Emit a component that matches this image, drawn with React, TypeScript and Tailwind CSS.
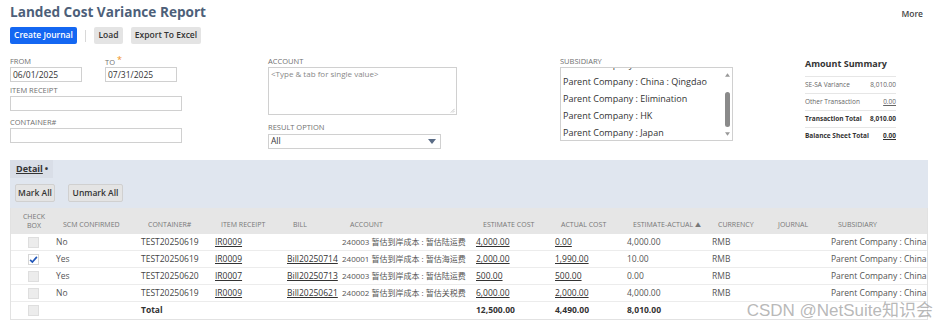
const cols = 'grid grid-cols-[40px_85px_74px_72px_55px_134px_79px_72px_85px_66px_53px_103px]';

type Row = {
  checked: boolean;
  scm: string;
  container: string;
  receipt: string;
  bill: string;
  account: string;
  estimate: string;
  actual: string;
  diff: string;
};

const rows: Row[] = [
  { checked: false, scm: 'No', container: 'TEST20250619', receipt: 'IR0009', bill: '', account: '240003 暂估到岸成本 : 暂估陆运费', estimate: '4,000.00', actual: '0.00', diff: '4,000.00' },
  { checked: true, scm: 'Yes', container: 'TEST20250619', receipt: 'IR0009', bill: 'Bill20250714', account: '240001 暂估到岸成本 : 暂估海运费', estimate: '2,000.00', actual: '1,990.00', diff: '10.00' },
  { checked: false, scm: 'Yes', container: 'TEST20250620', receipt: 'IR0007', bill: 'Bill20250713', account: '240003 暂估到岸成本 : 暂估陆运费', estimate: '500.00', actual: '500.00', diff: '0.00' },
  { checked: false, scm: 'No', container: 'TEST20250619', receipt: 'IR0009', bill: 'Bill20250621', account: '240002 暂估到岸成本 : 暂估关税费', estimate: '6,000.00', actual: '2,000.00', diff: '4,000.00' },
];

function Label({ children }: { children: React.ReactNode }) {
  return <div className="h-[9px] leading-[9px] text-[7.5px] uppercase text-[#707070]">{children}</div>;
}

function Box({ checked = false }: { checked?: boolean }) {
  return (
    <div className={`ml-[17px] w-[11px] h-[11px] border flex items-center justify-center ${checked ? 'bg-white border-[#d6d6d6]' : 'bg-[#ececec] border-[#dedede]'}`}>
      {checked && (
        <svg className="w-[9px] h-[9px]" viewBox="0 0 12 12">
          <path d="M1.5 6.5 L4.5 9.5 L10.5 2.5" fill="none" stroke="#2156b8" strokeWidth={2.2} />
        </svg>
      )}
    </div>
  );
}

export default function App() {
  return (
    <div className="relative w-[936px] h-[324px] overflow-hidden bg-white font-['Open_Sans','Noto_Sans_CJK_SC',sans-serif] text-[#333]">
      {/* Title */}
      <div className="flex items-start justify-between pl-[10px] pr-[13px] pt-[1px]">
        <h1 className="text-[13.6px] leading-[22px] font-bold text-[#4d5f79]">Landed Cost Variance Report</h1>
        <span className="mt-[7px] text-[8.5px] font-semibold text-[#444]">More</span>
      </div>

      {/* Buttons */}
      <div className="flex items-center pl-[10px] mt-[4px] h-[17px]">
        <button className="h-[17px] w-[67px] rounded-[2px] bg-[#1467f2] text-white text-[8.5px] font-semibold">Create Journal</button>
        <div className="mx-[8px] w-px h-[12px] bg-[#d8d8d8]" />
        <button className="h-[17px] w-[29px] rounded-[2px] bg-[#e4e4e4] text-[8.5px] font-semibold text-[#333]">Load</button>
        <button className="ml-[8px] h-[17px] w-[70px] rounded-[2px] bg-[#e4e4e4] text-[8.5px] font-semibold text-[#333]">Export To Excel</button>
      </div>

      {/* Form */}
      <div className="flex mt-[13px] h-[103px]">
        <div className="w-[268px] pl-[10px]">
          <div className="flex">
            <div className="w-[95px]">
              <Label>From</Label>
              <div className="mt-px w-[72px] h-[15px] border border-[#d0d0d0] text-[8.5px] leading-[13px] pl-[2px]">06/01/2025</div>
            </div>
            <div>
              <Label>
                To <span className="text-[#f0901a] text-[9px] relative top-[-2px]">*</span>
              </Label>
              <div className="mt-px w-[72px] h-[15px] border border-[#d0d0d0] text-[8.5px] leading-[13px] pl-[2px]">07/31/2025</div>
            </div>
          </div>
          <div className="mt-[4px]">
            <Label>Item Receipt</Label>
            <div className="mt-px w-[172px] h-[15px] border border-[#d0d0d0]" />
          </div>
          <div className="mt-[7px]">
            <Label>Container#</Label>
            <div className="mt-px w-[172px] h-[15px] border border-[#d0d0d0]" />
          </div>
        </div>

        <div className="w-[292px]">
          <Label>Account</Label>
          <div className="relative mt-px w-[189px] h-[48px] border border-[#d0d0d0] text-[8px] text-[#888] pl-[2px] leading-[12px]">
            &lt;Type &amp; tab for single value&gt;
            <svg className="absolute right-[1px] bottom-[1px] w-[5px] h-[5px]" viewBox="0 0 6 6">
              <path d="M5.5 1 L1 5.5 M5.5 3.5 L3.5 5.5" stroke="#aaa" strokeWidth={0.8} />
            </svg>
          </div>
          <div className="mt-[8px]">
            <Label>Result Option</Label>
            <div className="mt-[2px] w-[173px] h-[15px] border border-[#d0d0d0] flex items-center justify-between pl-[2px] pr-[4px]">
              <span className="text-[8.5px]">All</span>
              <svg className="w-[8px] h-[5px]" viewBox="0 0 8 5">
                <path d="M0 0 H8 L4 5 Z" fill="#5a6c86" />
              </svg>
            </div>
          </div>
        </div>

        <div className="w-[245px]">
          <Label>Subsidiary</Label>
          <div className="relative mt-px w-[173px] h-[74px] border border-[#d0d0d0] overflow-hidden">
            <div className="pl-[2px] text-[9px] text-[#333] mt-[-12px]">
              {['Parent Company : China', 'Parent Company : China : Qingdao', 'Parent Company : Elimination', 'Parent Company : HK', 'Parent Company : Japan'].map((s) => (
                <div key={s} className="h-[17px] leading-[17px]">{s}</div>
              ))}
            </div>
            <div className="absolute right-[2px] top-[2px] bottom-[2px] w-[6px] flex flex-col items-center">
              <svg className="w-[5px] h-[4px] mt-[3px]" viewBox="0 0 6 4"><path d="M0 4 L3 0 L6 4 Z" fill="#999" /></svg>
              <div className="mt-[15px] w-[5px] h-[35px] rounded-full bg-[#8a8a8a]" />
              <div className="flex-1" />
              <svg className="w-[5px] h-[4px] mb-[2px]" viewBox="0 0 6 4"><path d="M0 0 L6 0 L3 4 Z" fill="#999" /></svg>
            </div>
          </div>
        </div>

        <div className="w-[91px]">
          <div className="mt-[1px] text-[9px] font-bold text-[#333] leading-[12px]">Amount Summary</div>
          <div className="mt-[6px] text-[6.5px]">
            <div className="h-[17px] border-t border-[#e6e6e6] flex items-center justify-between text-[#666]">
              <span>SE-SA Variance</span>
              <span>8,010.00</span>
            </div>
            <div className="h-[17px] border-t border-[#e6e6e6] flex items-center justify-between text-[#666]">
              <span>Other Transaction</span>
              <span className="underline">0.00</span>
            </div>
            <div className="h-[17px] border-t border-[#e6e6e6] flex items-center justify-between font-bold text-[#333]">
              <span>Transaction Total</span>
              <span>8,010.00</span>
            </div>
            <div className="h-[17px] border-t border-[#e6e6e6] flex items-center justify-between font-bold text-[#333]">
              <span>Balance Sheet Total</span>
              <span className="underline">0.00</span>
            </div>
          </div>
        </div>
      </div>

      {/* Detail */}
      <div className="ml-[10px] w-[918px]">
        <div className="h-[48px] bg-[#e0e6ef]">
          <div className="w-[43px] h-[18px] bg-[#d9dee7] flex items-center pl-[6px] text-[9px] font-bold text-[#333]">
            <span className="underline">Detail</span>
            <span className="ml-[2px]">•</span>
          </div>
          <div className="flex mt-[6px] pl-[5px] gap-[13px]">
            <button className="h-[18px] w-[40px] rounded-[2px] bg-[#e4e4e4] border border-[#d0d0d0] text-[8.5px] font-semibold text-[#333]">Mark All</button>
            <button className="h-[18px] w-[55px] rounded-[2px] bg-[#e4e4e4] border border-[#d0d0d0] text-[8.5px] font-semibold text-[#333]">Unmark All</button>
          </div>
        </div>

        <div className="border-l border-r border-b border-[#e2e2e2]">
          <div className={`${cols} h-[26px] bg-[#e6e6e6] text-[7px] uppercase text-[#777] items-end pb-[5px]`}>
            <div className="text-center leading-[9px] pl-[6px] self-start pt-[4px]">Check<br />Box</div>
            <div className="pl-[12px]">SCM Confirmed</div>
            <div className="pl-[12px]">Container#</div>
            <div className="pl-[11px]">Item Receipt</div>
            <div className="pl-[11px]">Bill</div>
            <div className="pl-[13px]">Account</div>
            <div className="pl-[12px]">Estimate Cost</div>
            <div className="pl-[11px]">Actual Cost</div>
            <div className="pl-[11px]">
              Estimate-Actual <span className="text-[6px]">▲</span>
            </div>
            <div className="pl-[11px]">Currency</div>
            <div className="pl-[5px]">Journal</div>
            <div className="pl-[12px]">Subsidiary</div>
          </div>

          {rows.map((r, i) => (
            <div key={i} className={`${cols} h-[17px] items-center border-b border-[#ececec] text-[8.5px] text-[#555]`}>
              <Box checked={r.checked} />
              <div className="pl-[5px]">{r.scm}</div>
              <div className="pl-[5px] text-[#444]">{r.container}</div>
              <div className="pl-[5px] underline text-[#333]">{r.receipt}</div>
              <div className="pl-[5px] underline text-[#333]">{r.bill}</div>
              <div className="pl-[5px] whitespace-nowrap text-[8px]">{r.account}</div>
              <div className="pl-[5px] underline text-[#333]">{r.estimate}</div>
              <div className="pl-[5px] underline text-[#333]">{r.actual}</div>
              <div className="pl-[5px]">{r.diff}</div>
              <div className="pl-[5px]">RMB</div>
              <div />
              <div className="pl-[5px] whitespace-nowrap">Parent Company : China</div>
            </div>
          ))}

          <div className={`${cols} h-[17px] items-center text-[8.5px] font-bold text-[#333]`}>
            <Box />
            <div />
            <div className="pl-[5px]">Total</div>
            <div />
            <div />
            <div />
            <div className="pl-[5px]">12,500.00</div>
            <div className="pl-[5px]">4,490.00</div>
            <div className="pl-[5px]">8,010.00</div>
            <div />
            <div />
            <div />
          </div>
        </div>
      </div>

      {/* Watermark */}
      <div className="absolute right-[3px] bottom-[3px] text-[17px] leading-[20px] text-[#a6a6a6]/80 font-['Liberation_Sans','Noto_Sans_CJK_SC',sans-serif]">
        CSDN @NetSuite知识会
      </div>
    </div>
  );
}
